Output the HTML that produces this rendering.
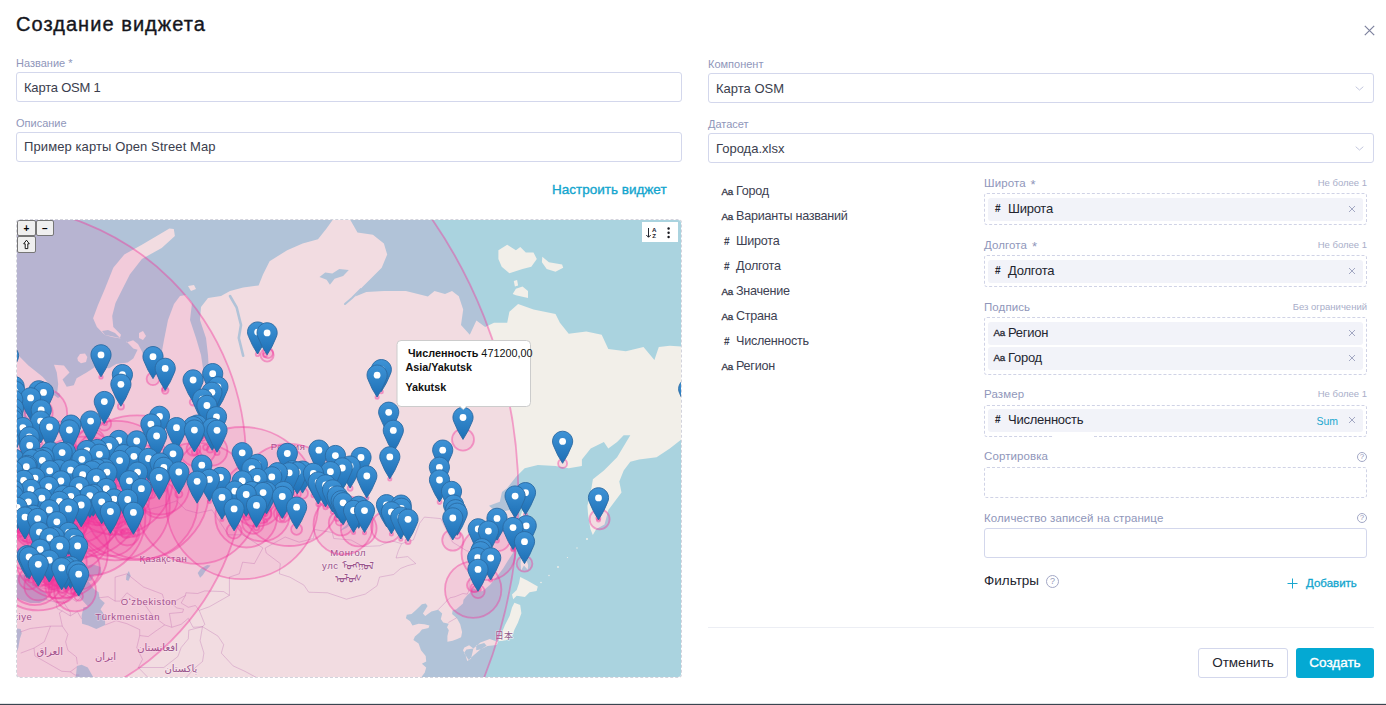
<!DOCTYPE html>
<html lang="ru"><head><meta charset="utf-8"><title>Создание виджета</title>
<style>
*{box-sizing:border-box;margin:0;padding:0}
html,body{width:1386px;height:705px;overflow:hidden;background:#fff}
body{font-family:"Liberation Sans","Noto Sans CJK JP",sans-serif;color:#2b2d3b;position:relative}
.abs{position:absolute}
h1{position:absolute;left:16px;top:12px;font-size:20px;line-height:24px;font-weight:400;color:#15161c;-webkit-text-stroke:.380px #15161c;letter-spacing:1.050px;white-space:nowrap}
.lbl{position:absolute;font-size:11px;line-height:14px;color:#8f96ba;white-space:nowrap}
.lbl.r{font-size:11.5px;letter-spacing:.1px}.lbl i{font-style:normal;margin-left:1.500px;font-size:13px;line-height:10px;position:relative;top:2px}
.hint{position:absolute;font-size:9.5px;line-height:12px;color:#a9aec9;white-space:nowrap;text-align:right}
.inp{position:absolute;border:1px solid #d3d7ec;border-radius:3px;background:#fff;font-size:13px;color:#3a3d4d;padding-left:7px;white-space:nowrap}
.inp span{position:absolute;left:7px;top:0}
.dash{position:absolute;left:984px;width:383px;border:1px dashed #d0d3e6;border-radius:3px}
.chip{position:absolute;left:988px;width:375px;height:23px;background:#f2f3f9;border-radius:3px;font-size:13px;color:#23252f;white-space:nowrap}
.chip .t{position:absolute;left:20px;top:3px;line-height:16px;letter-spacing:-.25px}
.chip .ic,.fld .ic{position:absolute;font-weight:700;color:#23252f}
.chip .aa{left:5.500px;top:3.800px;font-size:9.800px;line-height:14px;letter-spacing:-.3px;font-weight:400;-webkit-text-stroke:.3px #23252f}
.chip .hs{left:7px;top:4px;font-size:10px;line-height:14px}
.chip .x{position:absolute;right:7px;top:7px;width:8px;height:8px}
.fld{position:absolute;left:720px;height:16px;font-size:12.600px;color:#3d4152;white-space:nowrap}
.fld .t{position:absolute;left:16px;top:0;line-height:16px;letter-spacing:-.25px}
.fld .aa{left:1.500px;top:1.800px;font-size:9.800px;line-height:14px;letter-spacing:-.3px;color:#2f3242;font-weight:400;-webkit-text-stroke:.3px #2f3242}
.fld .hs{left:4px;top:2px;font-size:10px;line-height:14px;color:#3d4152}
.q{position:absolute;width:10px;height:10px;border:1px solid #a3a8c6;border-radius:50%;font-size:8px;line-height:8px;text-align:center;color:#9499ba}
.btn{position:absolute;top:648px;height:30px;border-radius:3px;font-size:13.5px;line-height:28px;text-align:center;white-space:nowrap}
</style></head><body>
<h1>Создание виджета</h1>
<svg class="abs" style="left:1364px;top:25.300px" width="11" height="11" viewBox="0 0 11 11"><path d="M.8.8l9.4 9.4M10.200.8L.8 10.200" stroke="#7d829e" stroke-width="1.200" fill="none"/></svg>

<div class="lbl" style="left:16px;top:56px">Название *</div>
<div class="inp" style="left:16px;top:72px;width:666px;height:30px"><span style="line-height:29px;letter-spacing:-.2px">Карта OSM 1</span></div>
<div class="lbl" style="left:16px;top:116px">Описание</div>
<div class="inp" style="left:16px;top:132px;width:666px;height:30px"><span style="line-height:28px;letter-spacing:.1px">Пример карты Open Street Map</span></div>

<div class="lbl" style="left:708px;top:57px">Компонент</div>
<div class="inp" style="left:708px;top:73px;width:666px;height:30px"><span style="line-height:30px">Карта OSM</span></div>
<div class="lbl" style="left:708px;top:117px">Датасет</div>
<div class="inp" style="left:708px;top:133px;width:666px;height:30px"><span style="line-height:30px">Города.xlsx</span></div>
<svg class="abs" style="left:1355px;top:86px" width="9" height="5" viewBox="0 0 9 5"><path d="M.7.7l3.800 3.300L8.300.7" stroke="#c3c7de" stroke-width="1" fill="none"/></svg>
<svg class="abs" style="left:1355px;top:146px" width="9" height="5" viewBox="0 0 9 5"><path d="M.7.7l3.800 3.300L8.300.7" stroke="#c3c7de" stroke-width="1" fill="none"/></svg>

<div class="abs" style="left:552px;top:182px;font-size:13.500px;line-height:16px;color:#12a5ce;-webkit-text-stroke:.35px #12a5ce;white-space:nowrap;letter-spacing:0">Настроить виджет</div>

<!-- MAP -->
<div id="map" class="abs" style="left:16px;top:219px;width:666px;height:459px;border:1px dashed #d3d3dc;border-radius:4px;overflow:hidden;background:#fff">
<!--MAPSVG-->
<svg width="664" height="457" viewBox="17 220 664 457" style="position:absolute;left:0;top:0;display:block" font-family="'Liberation Sans','DejaVu Sans','Noto Sans CJK JP',sans-serif">
<defs><linearGradient id="mg" x1="0" y1="0" x2="0" y2="1"><stop offset="0" stop-color="#3e93d6"/><stop offset="1" stop-color="#1d6fb5"/></linearGradient><path id="b" d="M0-.2Q-5.400-8.200-9-17.600A10.100 10.100 0 1 1 9-17.600Q5.400-8.200 0-.2Z" fill="url(#mg)" stroke="#2a6aa3" stroke-width=".9" stroke-linejoin="round"/><g id="m"><use href="#b"/><circle cx="0" cy="-22.100" r="3.400" fill="#fff"/></g><clipPath id="cl"><rect x="17" y="220" width="664" height="457"/></clipPath></defs>
<g clip-path="url(#cl)">
<rect x="17" y="220" width="664" height="457" fill="#aad3df"/>
<path d="M10 354 L17 354 L28.4 365.4 L42.6 376.8 L54 389.5 L56.8 396 L58.2 384 L56.8 372.5 L54 364.7 L63.9 365.4 L69.5 372.5 L62.5 379.6 L66.7 386.7 L73.8 385.3 L76.6 378.2 L86.6 372.5 L95.1 367 L109.2 368.3 L116.3 364 L127.7 362.6 L133.3 358.4 L137.6 349.8 L133.3 348.4 L126.3 341.3 L126.5 342.5 L133.1 340.3 L138 344 L141.9 351.3 L146 362 L150 370 L156 371 L160 362 L164 340 L168 320 L174 304 L180 296 L186 295 L192 303 L190 320 L196 338 L201 355 L204 375 L206 390 L209 390 L209 372 L208 355 L206 338 L200 320 L201 307 L208 298 L221 296 L230 291 L243.2 287.6 L258.6 285.4 L263 274.4 L269.6 261.2 L287.2 250.2 L302.6 243.6 L318 239.2 L326.7 228.2 L333.3 219 L349.8 219 L357.5 232.6 L372.9 234.8 L383.9 243.6 L387.2 254.6 L381.7 267.8 L370.7 278.8 L361.9 287.6 L355.3 296.4 L366.3 292 L383.9 290.9 L405.9 290.9 L427.9 296.4 L434.5 290.9 L445 294 L452 291 L458.8 296.3 L463.2 309.5 L461 325 L469.8 334.8 L476.4 320.5 L485.2 327.1 L494 322.7 L507.2 322.7 L509.4 311.7 L518.1 304 L533.5 309.5 L555.5 313.9 L559.9 322.7 L568.7 333.7 L586.3 331.5 L601.7 334.8 L608.3 349.1 L625.9 351.3 L643.5 346.9 L654.4 360.1 L658.8 346.9 L669.8 345.8 L690 346.9 L690 436 L681 439.7 L669.8 448.5 L656.6 457.3 L639 459.5 L630.3 461.7 L623.7 470.5 L619.3 481.5 L621.5 492.5 L614.9 501.3 L608.3 510.1 L606 518.9 L604.5 524.4 L596.3 529 L592.8 534.9 L590.4 529 L588.1 515 L587.4 505.7 L590.7 492.5 L592.9 479.3 L603.9 470.5 L617.1 457.3 L623.7 446.3 L630.3 435.3 L623.7 435.3 L617.1 441.9 L608.3 448.5 L603.9 441.9 L590.7 448.5 L581.9 459.5 L581.9 466.1 L568.7 468.3 L555.5 466.1 L537.9 465 L524.7 468.3 L515.9 477.1 L507.2 488.1 L502 492 L499.8 501.7 L489 505.8 L497.5 513.1 L509.3 509.9 L517.8 517.1 L517.3 525.6 L514.4 534.8 L514 545.8 L513 553 L506.9 562.2 L503.1 568.4 L496.5 577.1 L490.4 584.4 L482.8 590.9 L478.6 591.9 L474.8 589 L472.9 588.3 L470.1 592.8 L467.7 594.8 L463.5 599.8 L463 603.6 L456.4 609.2 L452.6 610.4 L452.1 614.1 L456.9 618.3 L460.2 624.3 L462.1 632 L461.1 637.2 L457.3 638.9 L452.6 640.7 L447.4 641.8 L447.4 636.1 L448.8 630.2 L447 627.3 L448.8 623.7 L443.2 622.5 L440.8 618.9 L442.2 613.5 L438 609.8 L431.4 611.6 L425.2 615.9 L422.9 613.5 L427.6 606.1 L425.7 603.6 L421.9 604.2 L416.3 609.8 L411.6 614.1 L406.8 614.7 L405.9 618.3 L410.1 621.3 L412.5 625.5 L418.6 623.7 L424.3 624.3 L429.5 625.5 L428.5 627.9 L421.9 629.6 L419.6 632.6 L414.9 636.6 L413.4 640.1 L418.6 643.5 L421 650.3 L425.7 655.9 L426.2 661.5 L421.9 663.7 L426.2 667.5 L424.8 672.4 L421 677.7 L418.6 681.5 L420 690 L10 690Z" fill="#f2efe9"/>
<path d="M173.8 229 L169.4 228.6 L141.9 244.7 L124.3 254.6 L113.3 267.8 L104.5 289.8 L98 305.1 L93.1 318.3 L96.9 327.1 L104.5 334.8 L119.9 338.1 L121 334.8 L113.3 327.1 L112.2 316.1 L115.5 302.9 L122.1 289.8 L129.8 274.4 L141.9 259 L161.7 248 L174.9 235.9Z M77.3 358 L80 354 L85 353.4 L87.3 357 L86 362 L81 363.3 L78 361Z M102 331 L108 330 L115 333 L120.6 338.5 L112 337 L105 335Z M139 333 L143 331 L146 336 L143 340 L139 338Z M188 286 L194 285 L196 289 L191 291Z M498.4 250.2 L507.2 244.7 L515.9 250.2 L520.3 246.9 L525.8 252.4 L533.5 252.4 L536.8 259 L531.3 266.7 L522.5 268.9 L509.4 273.3 L501.7 266.7 L498.4 259Z M542.3 256.8 L548.9 262.3 L562.1 264.5 L563.2 267.8 L555.5 271.7 L546.7 268.9 L541.9 262.3Z M512.7 294.1 L515.9 288.7 L522.5 286.4 L528 290.9 L528 298.1 L515.9 295.2Z M513.8 281 L517.1 279.9 L518.1 285.4 L514.9 286.5Z M523.9 509.1 L525.8 515.5 L527.2 523.3 L526.7 534.8 L528.6 542.2 L532.9 549.4 L525.8 548 L525.3 556.6 L528.1 564.9 L527.7 569.7 L523.9 565.6 L521.1 570.4 L520.6 563.6 L521.5 553 L521.5 542.2 L520.1 531 L520.1 517.8 L522 511.5Z M520.2 577 L527.2 580.5 L537.8 586.4 L536.6 591.1 L529.6 592.2 L524.9 596.9 L516.7 595.8 L513.2 599.3 L512 594.6 L516.7 589.9 L519.1 582.9Z M514.4 602.8 L520.2 605.1 L521.4 613.3 L517.9 622.7 L514.4 629.7 L512 636.7 L506.2 640.2 L496.8 641.4 L489.8 639.1 L480.4 642.6 L473.4 648.4 L466.4 649.6 L464 653.1 L468.7 660.1 L473.4 655.5 L480.4 649.6 L487.5 646.1 L496.8 644.9 L500.3 636.7 L505 625 L509.7 615.7 L512 607.5Z M476.2 645.2 L484.2 643 L486.6 645.8 L480.9 649.2 L476.2 650.3Z M464.4 647.5 L469.1 645.2 L473.4 648.6 L471 658.7 L467.2 660.9 L465.4 654.8 L463 650.3Z" fill="#f2efe9"/>
<g fill="#f2efe9"><circle cx="541" cy="582.5" r="0.8"/><circle cx="549" cy="575.5" r="0.7"/><circle cx="558" cy="567" r="0.9"/><circle cx="567.5" cy="557.5" r="0.6"/><circle cx="577" cy="548" r="0.7"/><circle cx="587" cy="539" r="1"/></g>
<path d="M16 392.6 L27.8 395 L37.3 396.1 L43.4 392.6 L46.2 386.1 L50.5 390.9 L55.2 392 L59.4 393.2 L60.4 396.7 L58 397.9 L51.4 393.2 L46.7 397.9 L42 402.5 L39.6 411.4 L32.5 410.9 L29.2 408.1 L25.5 414.7 L29.7 420.1 L23.1 420.1 L16 415.3Z M72.7 573.1 L82.1 567 L92.5 564.2 L100.5 567 L101.9 575.1 L93.9 575.1 L91.5 580.5 L88.2 581.1 L93.9 589 L98.6 592.2 L99.6 598.6 L104.8 603 L100.5 609.2 L104.8 615.3 L105.2 624.9 L96.3 629 L88.2 625.5 L82.1 623.7 L81.6 615.9 L83.5 607.3 L88.2 606.7 L80.2 597.9 L75 590.3 L75 585.1 L71.2 580.5Z M126.5 575.1 L128.8 571.1 L130.7 575.8 L128.4 581.1 L126 579.8Z M197.7 573.1 L201 568.4 L207.2 564.9 L210.5 565.6 L205.8 570.4 L202.9 575.1 L200.1 577.8Z M340.3 531 L346.4 527.9 L354.9 521 L362.9 513.1 L368.1 500.9 L369.5 496.7 L365.3 498.4 L360.6 509.1 L353.5 517.8 L346.4 524.9 L341.2 529.5Z M6.6 569 L16 570.4 L17.4 575.1 L23.6 574.5 L27.3 575.1 L31.1 569.7 L27.8 565.6 L33 562.9 L36.3 562.9 L30.2 570.4 L28.8 575.1 L25 577.8 L30.2 581.1 L34.9 583.8 L39.1 587.7 L46.2 592.8 L47.2 599.2 L39.6 603 L30.2 603 L20.7 599.8 L6.6 596.7Z M76.9 665.9 L81.6 664.8 L87.8 667.5 L90.6 672.4 L93.9 678.3 L99.1 680.9 L105.7 685.2 L117 682.5 L117.5 688.3 L72.7 688.3 L76 675.1Z M6.6 627.3 L20.7 629 L21.7 633.2 L19.8 638.9 L18.4 647.5 L15.5 655.9 L12.7 660.4 L6.6 661.5Z M319.5 277 L325.2 272.6 L332.3 273.5 L339.3 269 L348.8 269.9 L343.1 276.1 L334.6 278.8 L329.9 284.8 L326.6 279.7Z" fill="#aad3df"/>
<path d="M230 296 L236.6 307.3 L241 325 L238.8 338 L243.2 355.7" fill="none" stroke="#aad3df" stroke-width="2.6" stroke-linecap="round" stroke-linejoin="round"/>
<path d="M361 289 L352 298 L345 304" fill="none" stroke="#aad3df" stroke-width="2" stroke-linecap="round" stroke-linejoin="round"/>
<path d="M82.1 567 L72.7 556.6 L72.7 542.2 L79.7 538.5 L91.5 531 L108.1 534.8 L124.6 534.8 L138.7 534.8 L141.1 519.4 L138.7 511.5 L157.6 507.4 L176.5 500.9 L185.9 509.9 L197.7 513.1 L211.9 509.9 L216.6 517.1 L228.4 534.8 L242.6 534.8 L254.4 542.2 L262.9 548 M265.2 548 L285.1 537 L299.2 542.2 L313.4 538.5 L314.8 529.5 L332.3 532.5 L333.7 538.5 L351.1 540 L362.9 546.6 L379.5 545.8 L391.3 540.7 L401.6 543.6 L398.3 550.9 L396 558 L407.8 556.6 L415.8 563.6 L407.8 565.6 L400.7 568.4 L393.6 574.5 L379.5 577.1 L377.1 585.7 L365.3 594.1 L346.4 599.2 L327.5 592.8 L308.7 592.2 L303.9 585.1 L289.8 577.1 L279.4 573.8 L280.3 563.6 L266.2 553 L265.2 548 M401.6 543.6 L413.4 540 L419.6 523.3 L424.3 517.1 L440.8 518.6 L452.6 542.2 L466.8 550.9 L485.7 553.7 L478.6 577.1 L469.1 578.5 L469.1 590.3 L467.2 594.1 M467.2 594.1 L463 593.5 L455 596.7 L449.8 597.9 L438 609.8 M448.4 622.5 L456.9 617.7 M262.9 548 L254.4 563.6 L242.6 562.2 L239.3 573.8 L229.4 577.1 L229.4 595.4 M229.4 595.4 L223.7 591.6 L204.8 590.9 L197.7 593.5 L185.9 592.8 L185.5 595.4 M185.5 595.4 L171.8 603 L164.7 601.7 L162.3 594.1 L143.5 587 L126.9 573.8 L115.1 577.1 L115.1 601.1 M115.1 601.1 L119.9 601.1 L126.9 592.8 L134 597.9 L143 602.3 L152.9 615.9 L164.7 624.9 M115.1 601.1 L108.1 596.7 L98.6 597.9 M105.2 624.9 L116.1 620.7 L126.9 623.7 L139.7 629.6 L139.7 635.5 M139.7 635.5 L148.2 636.6 L155.3 631.4 L164.7 624.9 M139.7 635.5 L136.8 647.5 L142.5 659.3 L138.3 667.5 M138.3 667.5 L163.8 667.5 L177.9 656.5 L181.2 647.5 L188.3 638.9 L188.8 630.2 L202.5 626.7 M164.7 624.9 L171.8 627.3 L181.2 624.3 L188.3 618.3 L193 627.3 L202.5 626.7 M185.5 595.4 L181.2 603 L188.3 607.3 L195.4 605.5 L199.2 610.4 M171.8 603 L176.5 607.9 L183.6 609.2 L182.6 612.3 L169.4 613.5 L171.8 627.3 M229.4 595.4 L209.5 606.7 L199.2 610.4 L204.8 624.3 L202.5 626.7 M202.5 626.7 L218 636.1 L223.7 644.7 L221.3 653.1 L233.1 665.9 L244.9 671.3 L256.7 677.7 M202.5 626.7 L200.1 640.7 L203.9 653.1 L202.5 661.5 L195.4 667.5 L185.9 677.7 M138.3 667.5 L147.2 676.7 L146.8 682 M62.3 626.1 L67.9 634.3 L65.6 641.8 L67.9 650.3 L76.4 657 L77.4 664.2 M62.3 626.1 L59.4 612.9 L62.3 611 L70.3 615.9 L77.4 611.6 L81.6 618.9 M20.3 632 L30.2 628.5 L50.5 626.1 L62.3 626.1 M50.5 626.1 L44.3 641.8 L34 648.1 L20.7 653.1 M34 648.1 L34.9 655.9 L61.8 671.3 L70.3 671.8 L76.9 666.9 M39.6 587.7 L53.8 589.6 L63.2 592.8 L70.3 597.3 L76.4 601.7 L80.2 597.9 M46.7 599.8 L56.1 602.3 L63.2 601.1 L70.3 597.3 M56.1 602.3 L57.1 608.6 L62.3 611 M63.2 601.1 L65.6 605.5 L70.3 612.3 L70.3 615.9 M17 533.3 L18.8 539.2 L30.2 542.9 L40.1 545.1 L38.2 556.6 L31.6 562.2 M70.3 671.8 L75 675.1 L79.3 675.1" fill="none" stroke="#b06ab0" stroke-opacity=".45" stroke-width=".7" stroke-linejoin="round"/>
<g fill="#8f5a8a" stroke="#fff" stroke-opacity=".55" stroke-width="1.600" paint-order="stroke" stroke-linejoin="round"><text x="163.3" y="561.5" text-anchor="middle" font-size="9.5" letter-spacing="0.4" >Қазақстан</text><text x="148.8" y="605.3" text-anchor="middle" font-size="9.5" letter-spacing="0.6" >Oʻzbekiston</text><text x="127.7" y="620.3" text-anchor="middle" font-size="9.5" letter-spacing="0.6" >Türkmenistan</text><text x="32.5" y="620" text-anchor="end" font-size="9.5" letter-spacing="0.6" >Türkiye</text><text x="49.8" y="654.5" text-anchor="middle" font-size="10" letter-spacing="0" >العراق</text><text x="105.5" y="659.5" text-anchor="middle" font-size="10" letter-spacing="0" >ایران</text><text x="157.5" y="650.5" text-anchor="middle" font-size="10" letter-spacing="0" >افغانستان</text><text x="180.9" y="671.5" text-anchor="middle" font-size="10" letter-spacing="0" >پاکستان</text><text x="348.2" y="555.8" text-anchor="middle" font-size="9.5" letter-spacing="0.6" >Монгол</text><text x="348" y="569.3" text-anchor="middle" font-size="9.5" letter-spacing="0.6" >улс ᠮᠣᠩᠭᠣᠯ</text><text x="348" y="581.5" text-anchor="middle" font-size="9.5" letter-spacing="0.6" >ᠤᠯᠤᠰ</text><text x="504" y="638.5" text-anchor="middle" font-size="9" letter-spacing="0.3" >日本</text><text x="305.5" y="450" text-anchor="end" font-size="9.5" letter-spacing="0.6" >Россия</text></g>
<g fill="#f0339e" fill-opacity=".097" stroke="#f0359b" stroke-opacity=".42" stroke-width="1.800"><circle cx="28.5" cy="497.3" r="490"/><circle cx="-8.9" cy="460.3" r="254.9"/><circle cx="242.2" cy="503.1" r="76.1"/><circle cx="136.9" cy="487.8" r="72.4"/><circle cx="58.5" cy="492.2" r="70.9"/><circle cx="197.1" cy="503.4" r="60.5"/><circle cx="82.7" cy="496.8" r="60.1"/><circle cx="87.5" cy="517.8" r="57.9"/><circle cx="140.8" cy="502.1" r="56.9"/><circle cx="116.3" cy="477.6" r="56.8"/><circle cx="115" cy="505.5" r="54.8"/><circle cx="289.2" cy="494.9" r="51.1"/><circle cx="38.3" cy="562" r="48.4"/><circle cx="60.9" cy="551.5" r="47"/><circle cx="68" cy="530.7" r="42.4"/><circle cx="35.7" cy="529.7" r="42.1"/><circle cx="84" cy="515.2" r="36.2"/><circle cx="101.9" cy="487.8" r="35.4"/><circle cx="39" cy="481" r="34.4"/><circle cx="79.2" cy="508.8" r="33.7"/><circle cx="246.2" cy="516.6" r="30.9"/><circle cx="343.1" cy="524.9" r="29.6"/><circle cx="160.1" cy="485.2" r="29.4"/><circle cx="34.8" cy="576.9" r="28.2"/><circle cx="473.2" cy="589.6" r="28.2"/><circle cx="262" cy="513.4" r="28"/><circle cx="98.2" cy="497.3" r="27.8"/><circle cx="38.4" cy="506.4" r="27.6"/><circle cx="110.9" cy="528.9" r="27.3"/><circle cx="85.2" cy="472.3" r="27.1"/><circle cx="251.9" cy="490.8" r="27"/><circle cx="488.4" cy="553.2" r="26.9"/><circle cx="63.2" cy="517.8" r="26.1"/><circle cx="37.6" cy="522.5" r="26"/><circle cx="257.1" cy="500.6" r="25.9"/><circle cx="42.2" cy="413.2" r="25"/><circle cx="28.4" cy="509.9" r="24.7"/><circle cx="73.8" cy="493.9" r="24.6"/><circle cx="44.2" cy="486.5" r="23.7"/><circle cx="20.3" cy="487.7" r="22.5"/><circle cx="77.6" cy="568" r="22.2"/><circle cx="133.9" cy="478.4" r="22"/><circle cx="129.5" cy="516.1" r="21.1"/><circle cx="13" cy="517.5" r="21"/><circle cx="75" cy="590.4" r="21"/><circle cx="21.6" cy="529.2" r="20.3"/><circle cx="197.3" cy="447.3" r="19.1"/><circle cx="29.7" cy="467.5" r="18.5"/><circle cx="159.2" cy="499.6" r="18.4"/><circle cx="22" cy="507.2" r="18"/><circle cx="358.7" cy="528.5" r="17.9"/><circle cx="39" cy="466.6" r="17.4"/><circle cx="41.5" cy="493.9" r="17.1"/><circle cx="12.9" cy="442" r="16.9"/><circle cx="23.5" cy="537.7" r="16.7"/><circle cx="21.1" cy="519.7" r="16.3"/><circle cx="44" cy="479.7" r="15.8"/><circle cx="64.1" cy="510" r="15.7"/><circle cx="48.9" cy="576.9" r="15.6"/><circle cx="386.5" cy="526.9" r="15.4"/><circle cx="212.2" cy="450.4" r="15.2"/><circle cx="90.6" cy="443.2" r="14.9"/><circle cx="46.4" cy="521.5" r="14.7"/><circle cx="62.1" cy="551" r="14.4"/><circle cx="55.9" cy="493" r="14.4"/><circle cx="38.3" cy="586.4" r="14"/><circle cx="76.9" cy="489.7" r="14"/><circle cx="38.8" cy="413" r="13.9"/><circle cx="330.4" cy="493.8" r="13.8"/><circle cx="114.9" cy="514.4" r="13.7"/><circle cx="497.5" cy="538.1" r="13"/><circle cx="61.7" cy="590" r="13"/><circle cx="34.1" cy="477.2" r="12.8"/><circle cx="34.5" cy="562" r="12.7"/><circle cx="341.2" cy="523" r="12.4"/><circle cx="127.3" cy="533.3" r="12.2"/><circle cx="95.4" cy="498" r="12.2"/><circle cx="26.4" cy="495.1" r="11.8"/><circle cx="30" cy="496.6" r="11.7"/><circle cx="56.7" cy="587" r="11.4"/><circle cx="260.1" cy="512.3" r="11.2"/><circle cx="463" cy="439.6" r="11"/><circle cx="27.5" cy="495.9" r="10.9"/><circle cx="253" cy="523" r="10.9"/><circle cx="452.8" cy="540.1" r="10.6"/><circle cx="29.4" cy="532.5" r="10.6"/><circle cx="29.1" cy="579" r="10.4"/><circle cx="132.5" cy="502" r="10.2"/><circle cx="40.6" cy="558.6" r="10"/><circle cx="143.1" cy="491.5" r="10"/><circle cx="76.4" cy="526.9" r="10"/><circle cx="118.9" cy="464.9" r="10"/><circle cx="599.6" cy="519.3" r="10"/><circle cx="29.5" cy="495.7" r="9.9"/><circle cx="28.1" cy="499.8" r="9.7"/><circle cx="68.5" cy="531" r="9.6"/><circle cx="79.6" cy="518.2" r="9.5"/><circle cx="28.9" cy="495.8" r="9.3"/><circle cx="66.5" cy="588.3" r="9.3"/><circle cx="29.7" cy="497.7" r="9.3"/><circle cx="282.4" cy="513.7" r="8.6"/><circle cx="45.8" cy="492" r="8.3"/><circle cx="134.5" cy="502.9" r="8.3"/><circle cx="44.9" cy="577.1" r="8.2"/><circle cx="32.3" cy="496.9" r="8.2"/><circle cx="40" cy="560.6" r="8.2"/><circle cx="114.8" cy="516.6" r="8.1"/><circle cx="33.9" cy="502.7" r="8"/><circle cx="524.5" cy="563.8" r="7.9"/><circle cx="49.8" cy="560" r="7.7"/><circle cx="234.1" cy="531" r="7.6"/><circle cx="212.7" cy="395.8" r="7.6"/><circle cx="141.7" cy="502.5" r="7.5"/><circle cx="97.7" cy="504.2" r="7.5"/><circle cx="26.8" cy="497.8" r="7.3"/><circle cx="133.7" cy="487.2" r="7.3"/><circle cx="193.5" cy="448.8" r="7"/><circle cx="27.4" cy="504" r="6.9"/><circle cx="104.3" cy="423.7" r="6.9"/><circle cx="75" cy="494" r="6.9"/><circle cx="206.9" cy="427.6" r="6.8"/><circle cx="31.5" cy="511.4" r="6.8"/><circle cx="473.6" cy="585.1" r="6.7"/><circle cx="478" cy="591.5" r="6.7"/><circle cx="40.1" cy="579.7" r="6.7"/><circle cx="267.1" cy="355" r="6.6"/><circle cx="106.9" cy="494.3" r="6.6"/><circle cx="85" cy="509.7" r="6.6"/><circle cx="34.8" cy="496.7" r="6.6"/><circle cx="49.3" cy="498.5" r="6.5"/><circle cx="153" cy="378.8" r="6.4"/><circle cx="27" cy="496.5" r="6.3"/><circle cx="251.4" cy="489.9" r="6.1"/><circle cx="30.8" cy="492.5" r="6.1"/><circle cx="278" cy="492.7" r="6.1"/><circle cx="136.7" cy="463.1" r="6.1"/><circle cx="30.2" cy="495.7" r="6"/><circle cx="54.1" cy="583.4" r="6"/><circle cx="118.8" cy="462.6" r="5.9"/><circle cx="173" cy="475.9" r="5.8"/><circle cx="103.2" cy="507.6" r="5.8"/><circle cx="65.2" cy="541.6" r="5.7"/><circle cx="30.7" cy="498.4" r="5.7"/><circle cx="57.7" cy="500.1" r="5.7"/><circle cx="23.6" cy="502.5" r="5.6"/><circle cx="32.5" cy="522.4" r="5.6"/><circle cx="104.8" cy="491" r="5.6"/><circle cx="52.5" cy="584.4" r="5.5"/><circle cx="105.7" cy="486" r="5.5"/><circle cx="99.4" cy="476.4" r="5.5"/><circle cx="302.5" cy="493.3" r="5.5"/><circle cx="29.5" cy="494.9" r="5.5"/><circle cx="32.3" cy="496.3" r="5.5"/><circle cx="296.6" cy="529.3" r="5.5"/><circle cx="31.3" cy="498.6" r="5.4"/><circle cx="86.6" cy="518.6" r="5.4"/><circle cx="79.8" cy="496.3" r="5.4"/><circle cx="257.5" cy="506.1" r="5.3"/><circle cx="70.7" cy="588.7" r="5.3"/><circle cx="259.8" cy="511.5" r="5.2"/><circle cx="266.5" cy="514" r="5.2"/><circle cx="48.8" cy="579.6" r="5.2"/><circle cx="243" cy="505.3" r="5.2"/><circle cx="29" cy="499.7" r="5.1"/><circle cx="49.3" cy="582.3" r="5.1"/><circle cx="268" cy="353.1" r="5.1"/><circle cx="176.5" cy="449.8" r="5.1"/><circle cx="49.7" cy="482.6" r="5"/><circle cx="335.4" cy="477.7" r="5"/><circle cx="292.3" cy="492.9" r="5"/><circle cx="126" cy="533.3" r="4.9"/><circle cx="33.4" cy="500.7" r="4.9"/><circle cx="41.9" cy="520.3" r="4.8"/><circle cx="134.4" cy="484.3" r="4.8"/><circle cx="55.3" cy="503.9" r="4.8"/><circle cx="17.7" cy="524.6" r="4.8"/><circle cx="87" cy="472.7" r="4.7"/><circle cx="100" cy="507.1" r="4.7"/><circle cx="106.3" cy="488.5" r="4.6"/><circle cx="39.3" cy="558.3" r="4.6"/><circle cx="562.6" cy="463.5" r="4.5"/><circle cx="38.4" cy="562.6" r="4.5"/><circle cx="137.3" cy="497" r="4.5"/><circle cx="59.7" cy="568.3" r="4.4"/><circle cx="24.2" cy="492.2" r="4.4"/><circle cx="251.5" cy="497.4" r="4.4"/><circle cx="70.8" cy="518.5" r="4.3"/><circle cx="78.7" cy="596.3" r="4.3"/><circle cx="58.8" cy="492" r="4.3"/><circle cx="28.1" cy="532.6" r="4.3"/><circle cx="97.5" cy="521.1" r="4.3"/><circle cx="474.8" cy="587.9" r="4.3"/><circle cx="53.1" cy="583.5" r="4.3"/><circle cx="151.1" cy="494.3" r="4.2"/><circle cx="62.1" cy="588.8" r="4.2"/><circle cx="340" cy="521.4" r="4.2"/><circle cx="75.7" cy="591" r="4.2"/><circle cx="256.9" cy="494.3" r="4.2"/><circle cx="40.9" cy="554.3" r="4.2"/><circle cx="141.4" cy="510.8" r="4.1"/><circle cx="258.2" cy="508.1" r="4"/><circle cx="54.6" cy="530.6" r="3.9"/><circle cx="140.9" cy="486.4" r="3.9"/><circle cx="26.3" cy="488.8" r="3.9"/><circle cx="123.6" cy="476.8" r="3.8"/><circle cx="71" cy="447.3" r="3.8"/><circle cx="202.4" cy="437.2" r="3.8"/><circle cx="96.5" cy="497" r="3.8"/><circle cx="31.5" cy="565.6" r="3.8"/><circle cx="35" cy="500.2" r="3.8"/><circle cx="119.6" cy="482.7" r="3.8"/><circle cx="281.7" cy="512.9" r="3.7"/><circle cx="283.6" cy="513.8" r="3.7"/><circle cx="134.9" cy="461.5" r="3.7"/><circle cx="59.4" cy="493.8" r="3.6"/><circle cx="297.3" cy="494.1" r="3.6"/><circle cx="159.5" cy="438.5" r="3.6"/><circle cx="36.9" cy="562.8" r="3.6"/><circle cx="247" cy="516.3" r="3.6"/><circle cx="178.8" cy="494.1" r="3.6"/><circle cx="85.4" cy="519.6" r="3.6"/><circle cx="287.3" cy="475.6" r="3.6"/><circle cx="134.9" cy="491.2" r="3.6"/><circle cx="126.5" cy="511.7" r="3.5"/><circle cx="30.6" cy="504.3" r="3.5"/><circle cx="42.3" cy="574.3" r="3.5"/><circle cx="478.2" cy="551" r="3.5"/><circle cx="133.7" cy="488.2" r="3.5"/><circle cx="104.3" cy="506.6" r="3.4"/><circle cx="27.9" cy="492.1" r="3.4"/><circle cx="193.1" cy="402.1" r="3.4"/><circle cx="439.4" cy="489.4" r="3.4"/><circle cx="98.4" cy="506.6" r="3.4"/><circle cx="115.3" cy="515.9" r="3.4"/><circle cx="33.5" cy="491.6" r="3.3"/><circle cx="165.2" cy="390.5" r="3.3"/><circle cx="457.2" cy="535.4" r="3.3"/><circle cx="54.1" cy="495.4" r="3.3"/><circle cx="64" cy="517.8" r="3.3"/><circle cx="42.7" cy="498.2" r="3.3"/><circle cx="46.2" cy="487.8" r="3.3"/><circle cx="74.4" cy="526.8" r="3.2"/><circle cx="24.2" cy="500.1" r="3.2"/><circle cx="89.8" cy="500.3" r="3.2"/><circle cx="27.7" cy="502.1" r="3.2"/><circle cx="54.4" cy="582.4" r="3.2"/><circle cx="49.4" cy="532" r="3.2"/><circle cx="244" cy="506.3" r="3.2"/><circle cx="210.1" cy="449.5" r="3.2"/><circle cx="106.2" cy="510.7" r="3.1"/><circle cx="120.9" cy="406.4" r="3.1"/><circle cx="114.8" cy="519.7" r="3.1"/><circle cx="114.1" cy="521.2" r="3"/><circle cx="127.7" cy="521.6" r="3"/><circle cx="27.9" cy="511.5" r="3"/><circle cx="114" cy="477" r="3"/><circle cx="122.4" cy="396.8" r="3"/><circle cx="79.1" cy="496.1" r="3"/><circle cx="56" cy="582.8" r="3"/><circle cx="39.3" cy="556.1" r="3"/><circle cx="37.6" cy="540.7" r="3"/><circle cx="49.9" cy="500.7" r="3"/><circle cx="133.1" cy="472" r="2.9"/><circle cx="30.9" cy="511.6" r="2.9"/><circle cx="277.5" cy="494.9" r="2.9"/><circle cx="455.6" cy="531.9" r="2.9"/><circle cx="43.5" cy="414.5" r="2.8"/><circle cx="84.4" cy="516.3" r="2.8"/><circle cx="216.5" cy="438.9" r="2.8"/><circle cx="256.5" cy="527.5" r="2.8"/><circle cx="56.6" cy="490.8" r="2.8"/><circle cx="54.9" cy="541.7" r="2.8"/><circle cx="123.7" cy="475" r="2.7"/><circle cx="137.5" cy="494.3" r="2.7"/><circle cx="37.3" cy="534.9" r="2.7"/><circle cx="205.7" cy="447.3" r="2.7"/><circle cx="46.9" cy="567.2" r="2.7"/><circle cx="97.2" cy="491.3" r="2.7"/><circle cx="337.3" cy="518.2" r="2.7"/><circle cx="40.2" cy="571.4" r="2.6"/><circle cx="27.2" cy="487.6" r="2.6"/><circle cx="217" cy="452.4" r="2.6"/><circle cx="408" cy="541.4" r="2.6"/><circle cx="30.8" cy="575.4" r="2.6"/><circle cx="27" cy="577.9" r="2.6"/><circle cx="59.3" cy="578.6" r="2.6"/><circle cx="98.3" cy="514.2" r="2.6"/><circle cx="43" cy="579.6" r="2.6"/><circle cx="194.4" cy="452.2" r="2.6"/><circle cx="35.3" cy="583.1" r="2.6"/><circle cx="58.6" cy="585.3" r="2.6"/><circle cx="350.1" cy="488.3" r="2.5"/><circle cx="28.3" cy="523.9" r="2.5"/><circle cx="73.2" cy="591.4" r="2.5"/><circle cx="282.3" cy="518.6" r="2.5"/><circle cx="73.3" cy="446.7" r="2.5"/><circle cx="251.7" cy="513.8" r="2.5"/><circle cx="30.2" cy="577.6" r="2.5"/><circle cx="156.6" cy="458.1" r="2.5"/><circle cx="388.7" cy="434.4" r="2.5"/><circle cx="63" cy="511" r="2.5"/><circle cx="75" cy="499.1" r="2.4"/><circle cx="220.4" cy="499.6" r="2.4"/><circle cx="131.6" cy="471.4" r="2.4"/><circle cx="93.2" cy="516.5" r="2.4"/><circle cx="129.4" cy="502.9" r="2.4"/><circle cx="479.9" cy="582.7" r="2.4"/><circle cx="263.1" cy="514.7" r="2.4"/><circle cx="36.7" cy="492.5" r="2.4"/><circle cx="30.6" cy="580.1" r="2.4"/><circle cx="325.6" cy="507" r="2.3"/><circle cx="34.6" cy="573.1" r="2.3"/><circle cx="37.4" cy="478.7" r="2.3"/><circle cx="40.2" cy="464.4" r="2.3"/><circle cx="202.6" cy="421.3" r="2.3"/><circle cx="76.7" cy="593" r="2.3"/><circle cx="234.8" cy="513.2" r="2.3"/><circle cx="39" cy="578.7" r="2.2"/><circle cx="135.8" cy="503.5" r="2.2"/><circle cx="34.2" cy="488.7" r="2.2"/><circle cx="265.3" cy="513.8" r="2.2"/><circle cx="48.5" cy="522.2" r="2.2"/><circle cx="39.4" cy="554.2" r="2.2"/><circle cx="23.4" cy="517.2" r="2.2"/><circle cx="142" cy="479" r="2.2"/><circle cx="148.5" cy="480.6" r="2.2"/><circle cx="96.3" cy="500.9" r="2.2"/><circle cx="30.9" cy="504.7" r="2.1"/><circle cx="71.3" cy="584.7" r="2.1"/><circle cx="136.6" cy="497.5" r="2.1"/><circle cx="65.8" cy="589.4" r="2.1"/><circle cx="48.6" cy="484.6" r="2.1"/><circle cx="163.8" cy="489.5" r="2.1"/><circle cx="48.2" cy="515.9" r="2.1"/><circle cx="271.8" cy="499" r="2.1"/><circle cx="65.6" cy="474.4" r="2"/><circle cx="30.7" cy="518.2" r="2"/><circle cx="81.2" cy="527.1" r="2"/><circle cx="49.7" cy="492.9" r="2"/><circle cx="42.4" cy="577.9" r="2"/><circle cx="70.7" cy="504.6" r="2"/><circle cx="25" cy="539.2" r="2"/><circle cx="497" cy="540.5" r="2"/><circle cx="164.3" cy="389" r="2"/><circle cx="41.2" cy="432.1" r="2"/><circle cx="69.4" cy="452.1" r="2"/><circle cx="57.5" cy="525.2" r="2"/><circle cx="140" cy="507.9" r="2"/><circle cx="265" cy="355" r="2"/><circle cx="131.1" cy="508.9" r="2"/><circle cx="598.4" cy="517.9" r="2"/><circle cx="44.9" cy="484.3" r="2"/><circle cx="19.1" cy="529.8" r="2"/><circle cx="58.7" cy="518" r="1.9"/><circle cx="49.1" cy="536.3" r="1.9"/><circle cx="439.5" cy="502.1" r="1.9"/><circle cx="43.3" cy="555.3" r="1.9"/><circle cx="91.9" cy="493.2" r="1.9"/><circle cx="318.2" cy="504.2" r="1.9"/><circle cx="257.6" cy="354.2" r="1.9"/><circle cx="313.4" cy="495.5" r="1.9"/><circle cx="68.4" cy="588" r="1.9"/><circle cx="477.7" cy="579.8" r="1.9"/><circle cx="31.7" cy="481.8" r="1.9"/><circle cx="105.1" cy="423.3" r="1.9"/><circle cx="42.2" cy="487.8" r="1.9"/><circle cx="68.7" cy="554.6" r="1.8"/><circle cx="51.5" cy="499.8" r="1.8"/><circle cx="33.4" cy="537.5" r="1.8"/><circle cx="126.7" cy="531.2" r="1.8"/><circle cx="101.3" cy="504.5" r="1.8"/><circle cx="56.8" cy="543.9" r="1.8"/><circle cx="89.8" cy="517.7" r="1.8"/><circle cx="108.8" cy="468.6" r="1.8"/><circle cx="36.8" cy="484.8" r="1.8"/><circle cx="90.6" cy="508" r="1.7"/><circle cx="150.9" cy="446.2" r="1.7"/><circle cx="211.9" cy="414.4" r="1.7"/><circle cx="61.6" cy="585.4" r="1.7"/><circle cx="101" cy="377" r="1.7"/><circle cx="56" cy="489.6" r="1.7"/><circle cx="332.5" cy="512.1" r="1.7"/><circle cx="59.5" cy="523.6" r="1.7"/><circle cx="46.2" cy="503.8" r="1.7"/><circle cx="41.5" cy="550" r="1.6"/><circle cx="222" cy="519.5" r="1.6"/><circle cx="30.6" cy="540.6" r="1.6"/><circle cx="69.9" cy="499.2" r="1.6"/><circle cx="20.8" cy="499.2" r="1.6"/><circle cx="480.6" cy="573.9" r="1.6"/><circle cx="53.1" cy="574.9" r="1.6"/><circle cx="389.8" cy="479" r="1.6"/><circle cx="242.2" cy="474.9" r="1.6"/><circle cx="201.8" cy="487.3" r="1.6"/><circle cx="285.9" cy="473.6" r="1.6"/><circle cx="318.9" cy="472.3" r="1.6"/><circle cx="361" cy="479.6" r="1.6"/><circle cx="453.6" cy="527.2" r="1.6"/><circle cx="401.1" cy="527.3" r="1.6"/><circle cx="401.3" cy="530.4" r="1.6"/><circle cx="364.5" cy="532.7" r="1.6"/><circle cx="391.4" cy="534" r="1.6"/><circle cx="217.9" cy="409" r="1.6"/><circle cx="257.4" cy="486.5" r="1.6"/><circle cx="265.6" cy="521.2" r="1.6"/><circle cx="209.4" cy="501.5" r="1.6"/><circle cx="342.3" cy="490.1" r="1.6"/><circle cx="366.8" cy="498.1" r="1.6"/><circle cx="353.6" cy="532.6" r="1.6"/><circle cx="400.8" cy="539.3" r="1.6"/><circle cx="451.5" cy="513.6" r="1.6"/><circle cx="442.7" cy="472.3" r="1.6"/><circle cx="393.3" cy="452.5" r="1.6"/><circle cx="381.3" cy="391.8" r="1.6"/><circle cx="377.1" cy="397.3" r="1.6"/><circle cx="513" cy="549.7" r="1.6"/><circle cx="512.8" cy="548.8" r="1.6"/><circle cx="515.1" cy="518.2" r="1.6"/><circle cx="525.5" cy="514.8" r="1.6"/><circle cx="526.2" cy="547.9" r="1.6"/><circle cx="490.7" cy="580.1" r="1.6"/><circle cx="482" cy="570.9" r="1.6"/><circle cx="479.2" cy="589.4" r="1.6"/><circle cx="598.5" cy="520" r="1.6"/><circle cx="30.6" cy="420" r="1.6"/><circle cx="40.6" cy="443.2" r="1.6"/><circle cx="49.5" cy="449.1" r="1.6"/><circle cx="24" cy="479.6" r="1.6"/><circle cx="29.2" cy="459.1" r="1.6"/><circle cx="22.9" cy="449.8" r="1.6"/><circle cx="17.2" cy="529.5" r="1.6"/><circle cx="40.1" cy="538.8" r="1.6"/><circle cx="48.3" cy="554.1" r="1.6"/><circle cx="57.9" cy="581.1" r="1.6"/><circle cx="63.2" cy="578.8" r="1.6"/><circle cx="62.3" cy="539.8" r="1.6"/><circle cx="54.4" cy="559.2" r="1.6"/><circle cx="66.7" cy="552.5" r="1.6"/><circle cx="73.8" cy="560.8" r="1.6"/><circle cx="71.5" cy="529.4" r="1.6"/><circle cx="63.2" cy="528.2" r="1.6"/><circle cx="46.7" cy="522.6" r="1.6"/><circle cx="52.5" cy="522.2" r="1.6"/><circle cx="50.3" cy="527.3" r="1.6"/><circle cx="39.9" cy="513.8" r="1.6"/><circle cx="37.5" cy="512.9" r="1.6"/><circle cx="48.7" cy="508.7" r="1.6"/><circle cx="96.9" cy="514.3" r="1.6"/><circle cx="101.7" cy="523.9" r="1.6"/><circle cx="122.6" cy="531.7" r="1.6"/><circle cx="121.6" cy="531.1" r="1.6"/><circle cx="133.4" cy="534.5" r="1.6"/><circle cx="110.4" cy="533.6" r="1.6"/><circle cx="78.7" cy="503.6" r="1.6"/><circle cx="97.7" cy="495.9" r="1.6"/><circle cx="93.5" cy="497.5" r="1.6"/><circle cx="86.2" cy="494.3" r="1.6"/><circle cx="93.9" cy="492.6" r="1.6"/><circle cx="97.2" cy="471.7" r="1.6"/><circle cx="79" cy="474.9" r="1.6"/><circle cx="76.9" cy="483.9" r="1.6"/><circle cx="70.6" cy="492.2" r="1.6"/><circle cx="81.9" cy="481.4" r="1.6"/><circle cx="46.8" cy="473.4" r="1.6"/><circle cx="50.7" cy="474.3" r="1.6"/><circle cx="42.3" cy="482.5" r="1.6"/><circle cx="62.1" cy="474.7" r="1.6"/><circle cx="47.8" cy="485.6" r="1.6"/><circle cx="60.8" cy="488.3" r="1.6"/><circle cx="63.4" cy="494.8" r="1.6"/><circle cx="65.4" cy="499" r="1.6"/><circle cx="60.9" cy="503.1" r="1.6"/><circle cx="70.8" cy="480.5" r="1.6"/><circle cx="66.9" cy="482.5" r="1.6"/></g>
<g><use href="#m" x="257.6" y="354.2"/><use href="#m" x="267.1" y="355"/><use href="#m" x="101" y="377"/><use href="#m" x="8.5" y="377.9"/><use href="#m" x="153" y="378.8"/><use href="#m" x="165.2" y="390.5"/><use href="#m" x="381.3" y="391.8"/><use href="#m" x="212.7" y="395.8"/><use href="#m" x="122.4" y="396.8"/><use href="#m" x="377.1" y="397.3"/><use href="#m" x="193.1" y="402.1"/><use href="#m" x="120.9" y="406.4"/><use href="#m" x="14.1" y="408.7"/><use href="#m" x="217.9" y="409"/><use href="#m" x="688.7" y="411.1"/><use href="#m" x="38.8" y="413"/><use href="#m" x="14.9" y="413.4"/><use href="#m" x="211.9" y="414.4"/><use href="#m" x="43.5" y="414.5"/><use href="#m" x="30.6" y="420"/><use href="#m" x="202.6" y="421.3"/><use href="#m" x="12.8" y="421.9"/><use href="#m" x="104.3" y="423.7"/><use href="#m" x="206.9" y="427.6"/><use href="#m" x="13.5" y="430.6"/><use href="#m" x="41.2" y="432.1"/><use href="#m" x="388.7" y="434.4"/><use href="#m" x="12.5" y="437.9"/><use href="#m" x="159.5" y="438.5"/><use href="#m" x="216.5" y="438.9"/><use href="#m" x="463" y="439.6"/><use href="#m" x="12.9" y="442"/><use href="#m" x="90.6" y="443.2"/><use href="#m" x="40.6" y="443.2"/><use href="#m" x="150.9" y="446.2"/><use href="#m" x="197.3" y="447.3"/><use href="#m" x="71" y="447.3"/><use href="#m" x="193.5" y="448.8"/><use href="#m" x="49.5" y="449.1"/><use href="#m" x="176.5" y="449.8"/><use href="#m" x="22.9" y="449.8"/><use href="#m" x="212.2" y="450.4"/><use href="#m" x="69.4" y="452.1"/><use href="#m" x="194.4" y="452.2"/><use href="#m" x="217" y="452.4"/><use href="#m" x="393.3" y="452.5"/><use href="#m" x="156.6" y="458.1"/><use href="#m" x="29.2" y="459.1"/><use href="#m" x="118.8" y="462.6"/><use href="#m" x="9.1" y="462.7"/><use href="#m" x="136.7" y="463.1"/><use href="#m" x="562.6" y="463.5"/><use href="#m" x="29.7" y="467.5"/><use href="#m" x="108.8" y="468.6"/><use href="#m" x="97.2" y="471.7"/><use href="#m" x="318.9" y="472.3"/><use href="#m" x="442.7" y="472.3"/><use href="#m" x="87" y="472.7"/><use href="#b" x="50.7" y="474.3"/><use href="#b" x="65.6" y="474.4"/><use href="#m" x="62.1" y="474.7"/><use href="#m" x="242.2" y="474.9"/><use href="#m" x="287.3" y="475.6"/><use href="#m" x="173" y="475.9"/><use href="#m" x="99.4" y="476.4"/><use href="#b" x="123.6" y="476.8"/><use href="#m" x="335.4" y="477.7"/><use href="#m" x="133.9" y="478.4"/><use href="#m" x="389.8" y="479"/><use href="#m" x="361" y="479.6"/><use href="#b" x="44" y="479.7"/><use href="#m" x="148.5" y="480.6"/><use href="#b" x="39" y="481"/><use href="#m" x="13.9" y="481.3"/><use href="#m" x="81.9" y="481.4"/><use href="#b" x="31.7" y="481.8"/><use href="#m" x="42.3" y="482.5"/><use href="#m" x="119.6" y="482.7"/><use href="#m" x="160.1" y="485.2"/><use href="#m" x="257.4" y="486.5"/><use href="#m" x="201.8" y="487.3"/><use href="#b" x="27.2" y="487.6"/><use href="#m" x="350.1" y="488.3"/><use href="#m" x="26.3" y="488.8"/><use href="#m" x="439.4" y="489.4"/><use href="#m" x="163.8" y="489.5"/><use href="#m" x="342.3" y="490.1"/><use href="#m" x="251.9" y="490.8"/><use href="#b" x="104.8" y="491"/><use href="#b" x="97.2" y="491.3"/><use href="#b" x="58.8" y="492"/><use href="#m" x="70.6" y="492.2"/><use href="#m" x="12.9" y="492.8"/><use href="#m" x="292.3" y="492.9"/><use href="#m" x="49.7" y="492.9"/><use href="#b" x="91.9" y="493.2"/><use href="#m" x="302.5" y="493.3"/><use href="#m" x="330.4" y="493.8"/><use href="#m" x="178.8" y="494.1"/><use href="#m" x="297.3" y="494.1"/><use href="#m" x="106.9" y="494.3"/><use href="#m" x="137.5" y="494.3"/><use href="#m" x="289.2" y="494.9"/><use href="#m" x="277.5" y="494.9"/><use href="#m" x="313.4" y="495.5"/><use href="#m" x="82.7" y="496.8"/><use href="#m" x="366.8" y="498.1"/><use href="#m" x="271.8" y="499"/><use href="#m" x="159.2" y="499.6"/><use href="#m" x="220.4" y="499.6"/><use href="#m" x="35" y="500.2"/><use href="#m" x="257.1" y="500.6"/><use href="#m" x="96.3" y="500.9"/><use href="#m" x="209.4" y="501.5"/><use href="#m" x="439.5" y="502.1"/><use href="#m" x="23.6" y="502.5"/><use href="#m" x="129.4" y="502.9"/><use href="#m" x="242.2" y="503.1"/><use href="#m" x="60.9" y="503.1"/><use href="#m" x="197.1" y="503.4"/><use href="#m" x="318.2" y="504.2"/><use href="#m" x="325.6" y="507"/><use href="#m" x="48.7" y="508.7"/><use href="#m" x="79.2" y="508.8"/><use href="#m" x="106.2" y="510.7"/><use href="#m" x="141.4" y="510.8"/><use href="#m" x="30.9" y="511.6"/><use href="#m" x="332.5" y="512.1"/><use href="#b" x="13.4" y="512.5"/><use href="#m" x="234.8" y="513.2"/><use href="#m" x="451.5" y="513.6"/><use href="#m" x="283.6" y="513.8"/><use href="#b" x="251.7" y="513.8"/><use href="#b" x="266.5" y="514"/><use href="#m" x="263.1" y="514.7"/><use href="#m" x="525.5" y="514.8"/><use href="#b" x="93.2" y="516.5"/><use href="#m" x="246.2" y="516.6"/><use href="#m" x="13" y="517.5"/><use href="#m" x="89.8" y="517.7"/><use href="#b" x="63.2" y="517.8"/><use href="#m" x="337.3" y="518.2"/><use href="#m" x="515.1" y="518.2"/><use href="#m" x="70.8" y="518.5"/><use href="#m" x="282.3" y="518.6"/><use href="#m" x="222" y="519.5"/><use href="#m" x="598.5" y="520"/><use href="#m" x="41.9" y="520.3"/><use href="#m" x="114.1" y="521.2"/><use href="#m" x="127.7" y="521.6"/><use href="#m" x="341.2" y="523"/><use href="#m" x="59.5" y="523.6"/><use href="#m" x="28.3" y="523.9"/><use href="#m" x="101.7" y="523.9"/><use href="#m" x="343.1" y="524.9"/><use href="#m" x="386.5" y="526.9"/><use href="#m" x="81.2" y="527.1"/><use href="#m" x="453.6" y="527.2"/><use href="#m" x="401.1" y="527.3"/><use href="#m" x="256.5" y="527.5"/><use href="#m" x="358.7" y="528.5"/><use href="#m" x="296.6" y="529.3"/><use href="#m" x="17.2" y="529.5"/><use href="#m" x="401.3" y="530.4"/><use href="#m" x="68.5" y="531"/><use href="#m" x="234.1" y="531"/><use href="#m" x="455.6" y="531.9"/><use href="#m" x="49.4" y="532"/><use href="#m" x="353.6" y="532.6"/><use href="#m" x="364.5" y="532.7"/><use href="#m" x="110.4" y="533.6"/><use href="#m" x="391.4" y="534"/><use href="#m" x="133.4" y="534.5"/><use href="#m" x="457.2" y="535.4"/><use href="#b" x="33.4" y="537.5"/><use href="#m" x="25" y="539.2"/><use href="#m" x="400.8" y="539.3"/><use href="#m" x="452.8" y="540.1"/><use href="#m" x="497" y="540.5"/><use href="#m" x="37.6" y="540.7"/><use href="#m" x="408" y="541.4"/><use href="#m" x="56.8" y="543.9"/><use href="#m" x="526.2" y="547.9"/><use href="#m" x="513" y="549.7"/><use href="#m" x="478.2" y="551"/><use href="#m" x="488.4" y="553.2"/><use href="#m" x="39.4" y="554.2"/><use href="#m" x="68.7" y="554.6"/><use href="#b" x="54.4" y="559.2"/><use href="#m" x="49.8" y="560"/><use href="#m" x="73.8" y="560.8"/><use href="#m" x="524.5" y="563.8"/><use href="#m" x="77.6" y="568"/><use href="#m" x="59.7" y="568.3"/><use href="#m" x="482" y="570.9"/><use href="#m" x="40.2" y="571.4"/><use href="#m" x="480.6" y="573.9"/><use href="#b" x="27" y="577.9"/><use href="#m" x="29.1" y="579"/><use href="#m" x="477.7" y="579.8"/><use href="#m" x="490.7" y="580.1"/><use href="#m" x="49.3" y="582.3"/><use href="#m" x="38.3" y="586.4"/><use href="#b" x="70.7" y="588.7"/><use href="#b" x="65.8" y="589.4"/><use href="#m" x="61.7" y="590"/><use href="#m" x="478" y="591.5"/><use href="#b" x="76.7" y="593"/><use href="#m" x="78.7" y="596.3"/></g>
</g>
<g fill="#efefef" stroke="#767676" stroke-width="1"><rect x="17.500" y="220.500" width="18" height="15" rx="1.500"/><rect x="36.500" y="220.500" width="17" height="15" rx="1.500"/><rect x="17.500" y="236.500" width="18" height="16" rx="1.500"/></g>
<g fill="#000" font-size="10" font-weight="700" text-anchor="middle"><text x="26.400" y="231.800">+</text><text x="44.700" y="232.200">–</text></g>
<path d="M26.500 240.200L29.300 243.800H27.800V248.600H25.200V243.800H23.700Z" fill="#fff" stroke="#000" stroke-width=".9" stroke-linejoin="round"/>
<rect x="642" y="222" width="36" height="20" fill="#fff"/>
<path d="M648.500 228v9M646.300 235l2.200 2.300 2.200-2.300" fill="none" stroke="#23252f" stroke-width="1"/>
<g fill="#23252f" font-size="6.200" font-weight="700" text-anchor="middle"><text x="654.200" y="232.200">A</text><text x="654.200" y="237.800">Z</text></g>
<g fill="#17181f"><circle cx="668.600" cy="228.500" r="1.200"/><circle cx="668.600" cy="232.700" r="1.200"/><circle cx="668.600" cy="237" r="1.200"/></g>
<path d="M459.800 406.500L463.300 409.500L466.800 406.500Z" fill="#fff" stroke="#ccc" stroke-width=".8"/>
<rect x="397" y="340.500" width="133.500" height="66" rx="4" fill="#fff" stroke="#ccc" stroke-width="1"/>
<path d="M460.300 406L463.300 408.700L466.300 406Z" fill="#fff"/>
<g fill="#111" font-size="10.800"><text x="408" y="357"><tspan font-weight="700">Численность</tspan> 471200,00</text><text x="405.400" y="371" font-weight="700">Asia/Yakutsk</text><text x="405.400" y="391" font-weight="700">Yakutsk</text></g>
</svg>
<!--/MAPSVG-->
</div>

<!-- field list -->
<div class="fld" style="top:183px"><span class="ic aa">Aa</span><span class="t">Город</span></div>
<div class="fld" style="top:208px"><span class="ic aa">Aa</span><span class="t">Варианты названий</span></div>
<div class="fld" style="top:233px"><span class="ic hs">#</span><span class="t">Широта</span></div>
<div class="fld" style="top:258px"><span class="ic hs">#</span><span class="t">Долгота</span></div>
<div class="fld" style="top:283px"><span class="ic aa">Aa</span><span class="t">Значение</span></div>
<div class="fld" style="top:308px"><span class="ic aa">Aa</span><span class="t">Страна</span></div>
<div class="fld" style="top:333px"><span class="ic hs">#</span><span class="t">Численность</span></div>
<div class="fld" style="top:358px"><span class="ic aa">Aa</span><span class="t">Регион</span></div>

<!-- right panel -->
<div class="lbl r" style="left:984px;top:176px">Широта <i>*</i></div><div class="hint" style="right:19px;top:177px">Не более 1</div>
<div class="dash" style="top:193px;height:32px"></div>
<div class="chip" style="top:198px"><span class="ic hs">#</span><span class="t">Широта</span><svg class="x" viewBox="0 0 8 8"><path d="M1 1l6 6M7 1L1 7" stroke="#a3a8c3" stroke-width="1" fill="none"/></svg></div>

<div class="lbl r" style="left:984px;top:238px">Долгота <i>*</i></div><div class="hint" style="right:19px;top:239px">Не более 1</div>
<div class="dash" style="top:255px;height:32px"></div>
<div class="chip" style="top:260px"><span class="ic hs">#</span><span class="t">Долгота</span><svg class="x" viewBox="0 0 8 8"><path d="M1 1l6 6M7 1L1 7" stroke="#a3a8c3" stroke-width="1" fill="none"/></svg></div>

<div class="lbl r" style="left:984px;top:300px">Подпись</div><div class="hint" style="right:19px;top:301px">Без ограничений</div>
<div class="dash" style="top:317px;height:58px"></div>
<div class="chip" style="top:322px"><span class="ic aa">Aa</span><span class="t">Регион</span><svg class="x" viewBox="0 0 8 8"><path d="M1 1l6 6M7 1L1 7" stroke="#a3a8c3" stroke-width="1" fill="none"/></svg></div>
<div class="chip" style="top:347px"><span class="ic aa">Aa</span><span class="t">Город</span><svg class="x" viewBox="0 0 8 8"><path d="M1 1l6 6M7 1L1 7" stroke="#a3a8c3" stroke-width="1" fill="none"/></svg></div>

<div class="lbl r" style="left:984px;top:387px">Размер</div><div class="hint" style="right:19px;top:388px">Не более 1</div>
<div class="dash" style="top:405px;height:32px"></div>
<div class="abs" style="left:1053px;top:435px;width:40px;height:3px;background:#fff"></div>
<div class="chip" style="top:409px"><span class="ic hs">#</span><span class="t">Численность</span><span class="abs" style="right:25px;top:5px;font-size:10.5px;line-height:14px;color:#1aa7cf">Sum</span><svg class="x" viewBox="0 0 8 8"><path d="M1 1l6 6M7 1L1 7" stroke="#a3a8c3" stroke-width="1" fill="none"/></svg></div>

<div class="lbl r" style="left:984px;top:449px">Сортировка</div><div class="q" style="left:1357px;top:452px">?</div>
<div class="dash" style="top:467px;height:31px"></div>

<div class="lbl r" style="left:984px;top:511px">Количество записей на странице</div><div class="q" style="left:1357px;top:513px">?</div>
<div class="inp" style="left:984px;top:528px;width:383px;height:30px"></div>

<div class="abs" style="left:984px;top:573px;font-size:13.500px;line-height:16px;color:#23252f;white-space:nowrap">Фильтры</div>
<div class="q" style="left:1046px;top:575px;width:13px;height:13px;font-size:9px;line-height:11px">?</div>
<svg class="abs" style="left:1287px;top:578px" width="11" height="11" viewBox="0 0 11 11"><path d="M5.500.5v10M.5 5.500h10" stroke="#1aa7cf" stroke-width="1" fill="none"/></svg>
<div class="abs" style="left:1306px;top:576px;font-size:11.500px;line-height:14px;color:#12a5ce;-webkit-text-stroke:.3px #12a5ce;white-space:nowrap">Добавить</div>

<div class="abs" style="left:708px;top:627px;width:666px;height:1px;background:#eceef4"></div>
<div class="btn" style="left:1198px;width:90px;border:1px solid #d3d7ec;color:#23252f;background:#fff">Отменить</div>
<div class="btn" style="left:1296px;width:78px;background:#04a9d3;color:#fff;-webkit-text-stroke:.35px #fff;line-height:30px">Создать</div>

<div class="abs" style="left:0;top:703px;width:1386px;height:2px;background:linear-gradient(#fff 0,#c9ccd0 45%,#3b4550 55%)"></div>
</body></html>
